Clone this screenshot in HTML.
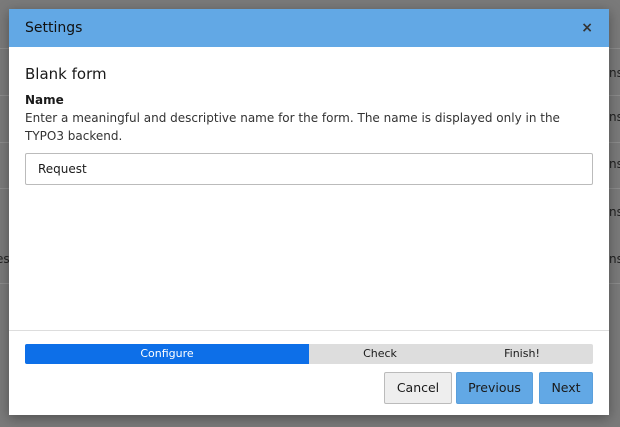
<!DOCTYPE html>
<html><head><style>
*{box-sizing:border-box;margin:0;padding:0}
body{width:620px;height:427px;background:#7a7a7a;font-family:"DejaVu Sans","Liberation Sans",sans-serif;position:relative;overflow:hidden;color:#1a1a1a}
.row{position:absolute;left:0;width:620px;height:1px;background:#8c8c8c}
.bg{position:absolute;font-size:12px;color:#222}
.modal{position:absolute;left:9px;top:9px;width:600px;height:406px;background:#fff;box-shadow:0 3px 12px rgba(0,0,0,.35)}
.hd{height:38px;background:#62a8e5;padding:0 16px;display:flex;align-items:center;justify-content:space-between;font-size:14px;color:#111}
.x{font-size:14px;font-weight:bold;color:#333}
h2{position:absolute;left:16px;top:56px;font-size:15px;font-weight:normal}
.lbl{position:absolute;left:16px;top:84px;font-size:12px;font-weight:bold}
.desc{position:absolute;left:16px;top:100px;width:555px;font-size:12px;line-height:18px;color:#333}
.inp{position:absolute;left:16px;top:144px;width:568px;height:32px;border:1px solid #bbb;border-radius:2px;padding:0 12px;font-size:12px;line-height:30px}
.ft{position:absolute;left:0;top:321px;width:600px;height:1px;background:#ddd}
.pb{position:absolute;left:16px;top:335px;width:568px;height:20px;background:#ddd;display:flex;font-size:11px;line-height:20px;border-radius:2px;overflow:hidden}
.pb div{text-align:center}
.btn{position:absolute;top:363px;height:32px;font-size:12.5px;line-height:30px;text-align:center;border:1px solid;border-radius:2px}
</style></head><body>
<div class="row" style="top:48px"></div><div class="row" style="top:95px"></div><div class="row" style="top:142px"></div><div class="row" style="top:188px"></div><div class="row" style="top:283px"></div>
<div class="bg" style="left:609px;top:66px">ns</div><div class="bg" style="left:609px;top:110px">ns</div><div class="bg" style="left:609px;top:157px">ns</div><div class="bg" style="left:609px;top:205px">ns</div><div class="bg" style="left:609px;top:252px">ns</div><div class="bg" style="left:-4px;top:252px">es</div>
<div class="modal">
<div class="hd"><span>Settings</span><span class="x">×</span></div>
<h2>Blank form</h2>
<div class="lbl">Name</div>
<div class="desc">Enter a meaningful and descriptive name for the form. The name is displayed only in the TYPO3 backend.</div>
<div class="inp">Request</div>
<div class="ft"></div>
<div class="pb"><div style="width:284px;background:#0d6fe8;color:#fff">Configure</div><div style="width:142px">Check</div><div style="width:142px">Finish!</div></div>
<div class="btn" style="left:375px;width:68px;background:#eee;border-color:#bbb">Cancel</div>
<div class="btn" style="left:447px;width:77px;background:#62a8e5;border-color:#5a9fdc">Previous</div>
<div class="btn" style="left:530px;width:54px;background:#62a8e5;border-color:#5a9fdc">Next</div>
</div>
</body></html>
